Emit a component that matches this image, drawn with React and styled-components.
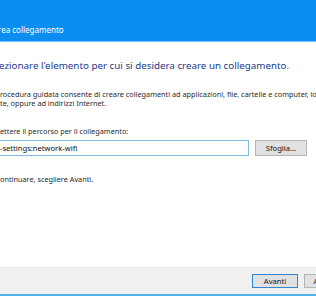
import styled, { createGlobalStyle } from "styled-components";

const Global = createGlobalStyle`
  html, body { margin: 0; padding: 0; background: #ffffff; }
  body { width: 316px; height: 296px; overflow: hidden; font-family: "Noto Sans", "Open Sans", sans-serif; }
`;

const Window = styled.div`
  width: 316px;
  height: 296px;
  display: flex;
  flex-direction: column;
  background: #ffffff;
  border-bottom: 2px solid #55aee6;
  box-sizing: border-box;
  overflow: hidden;
`;

const TitleBar = styled.div`
  height: 42px;
  background: #0a8ef2;
  border-bottom: 1px solid #78c0f6;
  display: flex;
  align-items: flex-end;
  padding: 0 0 6px 0;
  box-sizing: border-box;
`;

const Title = styled.span`
  color: #ffffff;
  font-size: 8px;
  line-height: 10px;
  margin-left: -2px;
  white-space: nowrap;
`;

const Body = styled.div`
  flex: 1;
  display: flex;
  flex-direction: column;
  padding: 17px 0 0 0;
  white-space: nowrap;
  overflow: hidden;
`;

const Heading = styled.div`
  color: #1d3a8a;
  font-size: 9.8px;
  line-height: 14px;
  margin-left: -1px;
`;

const Text = styled.div`
  color: #2a2a2a;
  font-size: 7.3px;
  line-height: 9px;
  margin-top: ${(p) => p.$top || 0}px;
`;

const PathRow = styled.div`
  display: flex;
  align-items: center;
  gap: 6px;
  margin-top: 4px;
`;

const Input = styled.div`
  width: 250px;
  height: 16px;
  margin-left: -1px;
  border: 1px solid #83b8e6;
  box-sizing: border-box;
  display: flex;
  align-items: center;
  font-size: 7.6px;
  color: #111111;
`;

const Button = styled.div`
  width: ${(p) => p.$w}px;
  height: ${(p) => p.$h}px;
  flex: none;
  background: #e1e1e1;
  border: 1px solid ${(p) => (p.$primary ? "#2f86d4" : "#b4b4b4")};
  box-sizing: border-box;
  display: flex;
  align-items: center;
  justify-content: center;
  font-size: 7.6px;
  color: #111111;
`;

const Footer = styled.div`
  height: 26px;
  background: #f0f0f0;
  border-top: 1px solid #e4e4e4;
  display: flex;
  align-items: center;
  justify-content: flex-end;
  gap: 6px;
  margin-right: -34px;
`;

export default function App() {
  return (
    <>
      <Global />
      <Window>
        <TitleBar>
          <Title>rea collegamento</Title>
        </TitleBar>
        <Body>
          <Heading>ezionare l'elemento per cui si desidera creare un collegamento.</Heading>
          <Text $top={17}>rocedura guidata consente di creare collegamenti ad applicazioni, file, cartelle e computer, lo</Text>
          <Text>te, oppure ad indirizzi Internet.</Text>
          <Text $top={19}>ettere il percorso per il collegamento:</Text>
          <PathRow>
            <Input>-settings:network-wifi</Input>
            <Button $w={52} $h={16}>Sfoglia...</Button>
          </PathRow>
          <Text $top={19}>ontinuare, scegliere Avanti.</Text>
        </Body>
        <Footer>
          <Button $primary $w={46} $h={14}>Avanti</Button>
          <Button $w={46} $h={14}>Annulla</Button>
        </Footer>
      </Window>
    </>
  );
}
